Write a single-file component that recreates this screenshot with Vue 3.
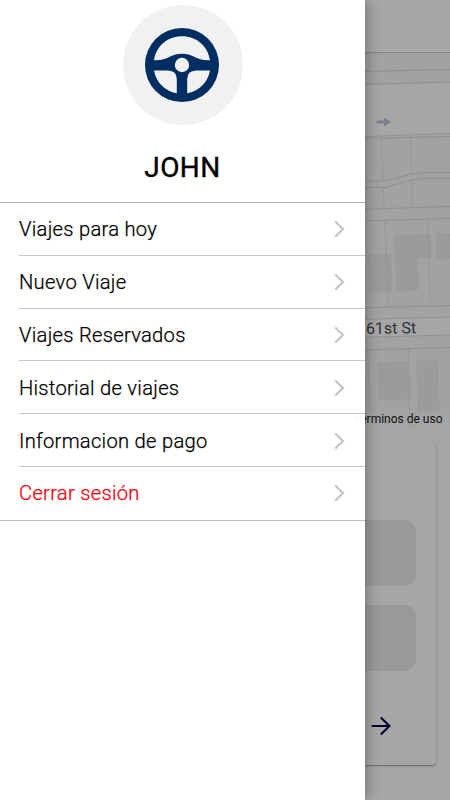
<script setup>
const items = [
  { label: 'Viajes para hoy' },
  { label: 'Nuevo Viaje' },
  { label: 'Viajes Reservados' },
  { label: 'Historial de viajes' },
  { label: 'Informacion de pago' },
  { label: 'Cerrar sesión', danger: true },
]
</script>

<template>
  <div class="screen">
    <main class="page">
      <header class="toolbar"></header>
      <section class="map">
        <svg viewBox="0 52 450 375" width="450" height="375">
          <rect x="0" y="52" width="450" height="375" fill="#a0a2a4" />
          <path class="open" d="M340 85L450 82V133.5L340 137ZM340 319L450 316.5V334.5L340 337.5Z" />
          <g class="building">
            <path d="M368 253.500L390.500 253.500L392 289.500L370 290Z" />
            <path d="M394.500 235L430 234L431 256L417 257L418 288.500L397 290Z" />
            <path d="M436 233L450 232.500V257.500L437 258Z" />
            <path d="M378.500 362L408 361V397.500L379.500 398.500Z" />
            <path d="M417 360.500L437.500 360L439 410.500L418 411.500Z" />
          </g>
          <g class="road">
            <path d="M340 71L450 68.500M340 84L450 81M340 136.500L450 132.500M340 138L450 135.500" />
            <path d="M340 180H385L406 174.500Q415 172 427 171.500H450" />
            <path d="M340 186.500H386L406 180.500Q415 178 427 177.500H450" />
            <path d="M340 209L450 205.500M340 220.500L450 217.500M340 307.500L450 304.500" />
            <path d="M340 319L450 316M340 337L450 334M340 349.500L450 346.500" />
          </g>
          <g class="lot">
            <path d="M369.500 52V71M381.500 138L383 180M410.500 137L411.500 173.500" />
            <path d="M383.500 187L384 207.500M412 180L412.500 206.500M385 219.500L388.500 306.500M427.500 218.500L430.500 305" />
            <path d="M367.500 349L370 410M408.500 348L410 427" />
          </g>
          <path d="M376.500 119.500H384V116.500L391 121L384 125.500V122.500H376.500Z" fill="#7c808e" />
          <text class="street" x="366" y="333" transform="rotate(-1 366 333)">61st St</text>
        </svg>
        <span class="terms">Términos de uso</span>
      </section>
      <section class="card">
        <div class="field"></div>
        <div class="field"></div>
        <svg class="next" viewBox="0 0 24 24" width="24" height="24">
          <path d="M2.700 12H20.500M11.800 3.500L20.500 12L11.800 20.500" />
        </svg>
      </section>
    </main>

    <aside class="drawer">
      <div class="profile">
        <div class="avatar">
          <svg viewBox="0 0 74 74" width="74" height="74">
            <path
              fill="#002d62"
              fill-rule="evenodd"
              d="M37 0A37 37 0 1 1 37 74A37 37 0 1 1 37 0Z
                 M9 32.300C11 18 22.500 8.200 37 8.200S63 18 65 32.300C51 33 49 25.800 37 25.800S23 33 9 32.300Z
                 M9 42.500H23Q31.800 42.800 31.800 51V65.200C20 63.200 11 54.500 9 42.500Z
                 M65 42.500H51Q42.200 42.800 42.200 51V65.200C54 63.200 63 54.500 65 42.500Z
                 M37 29.800A7.200 7.200 0 1 1 37 44.200A7.200 7.200 0 1 1 37 29.800Z"
            />
          </svg>
        </div>
        <h1 class="name">JOHN</h1>
      </div>
      <nav class="menu">
        <a v-for="item in items" :key="item.label" class="item" :class="{ danger: item.danger }">
          <span>{{ item.label }}</span>
          <svg viewBox="0 0 12 18" width="12" height="18">
            <path d="M2.300 1.500L10 9L2.300 16.500" />
          </svg>
        </a>
      </nav>
    </aside>
  </div>
</template>

<style>
body {
  margin: 0;
}
</style>

<style scoped>
.screen {
  position: relative;
  width: 450px;
  height: 800px;
  overflow: hidden;
  font-family: Roboto, sans-serif;
  background: #a6a6a6;
}
.page {
  display: flex;
  flex-direction: column;
  height: 100%;
}
.toolbar {
  box-sizing: border-box;
  height: 53px;
  flex: none;
  border-bottom: 1px solid #828282;
}
.map {
  position: relative;
  height: 375px;
  flex: none;
}
.map svg {
  display: block;
}
.open {
  fill: #a6a6a6;
}
.building {
  fill: #9b9b9b;
  stroke: #959595;
  stroke-width: 0.500;
}
.road,
.lot {
  fill: none;
  stroke: #8e9091;
  stroke-width: 1.200;
}
.lot {
  stroke: #939597;
  stroke-width: 1;
}
.street {
  font-size: 16px;
  fill: #303236;
  stroke: #a6a6a6;
  stroke-width: 1px;
  paint-order: stroke;
}
.terms {
  position: absolute;
  right: 0;
  bottom: 0;
  padding: 0 7.500px 0 4px;
  font-size: 12px;
  line-height: 17px;
  color: #101010;
  background: rgba(166, 166, 166, 0.500);
}
.card {
  display: flex;
  flex-direction: column;
  box-sizing: border-box;
  width: 422px;
  height: 323px;
  margin: 14px 0 0 14px;
  padding: 78px 20px 0;
  gap: 19px;
  border-radius: 4px;
  background: #a6a6a6;
  box-shadow: 0 1px 2px rgba(0, 0, 0, 0.400);
}
.field {
  height: 66px;
  flex: none;
  border-radius: 12px;
  background: #999;
}
.next {
  align-self: flex-end;
  margin: 24px 23px 0 0;
  fill: none;
  stroke: #000030;
  stroke-width: 2;
}
.drawer {
  position: absolute;
  top: 0;
  left: 0;
  width: 365px;
  height: 800px;
  background: #fff;
  box-shadow: 0 0 14px rgba(0, 0, 0, 0.380);
}
.profile {
  display: flex;
  flex-direction: column;
  align-items: center;
  box-sizing: border-box;
  height: 202px;
  padding-top: 5px;
}
.avatar {
  display: flex;
  align-items: center;
  justify-content: center;
  width: 120px;
  height: 120px;
  border-radius: 50%;
  background: #f1f1f1;
}
.avatar svg {
  margin-right: 1px;
}
.name {
  margin: 25px 0 0;
  font-size: 28px;
  font-weight: 400;
  line-height: 36px;
  letter-spacing: 0.400px;
  -webkit-text-stroke: 0.400px #000;
  color: #000;
}
.menu {
  border-top: 1px solid #b2b2b4;
  border-bottom: 1px solid #c0c0c2;
}
.item {
  display: flex;
  align-items: center;
  justify-content: space-between;
  box-sizing: border-box;
  height: 52.800px;
  margin-left: 19px;
  padding: 1px 20px 0 0;
  border-bottom: 1px solid #c8c7cc;
  font-size: 20.200px;
  font-weight: 300;
  letter-spacing: 0.270px;
  -webkit-text-stroke: 0.250px currentColor;
  color: #000;
}
.item:last-child {
  border-bottom: 0;
  padding-top: 0;
}
.item svg {
  fill: none;
  stroke: #c4c4c8;
  stroke-width: 2.200;
}
.danger {
  color: #f6000c;
}
</style>
